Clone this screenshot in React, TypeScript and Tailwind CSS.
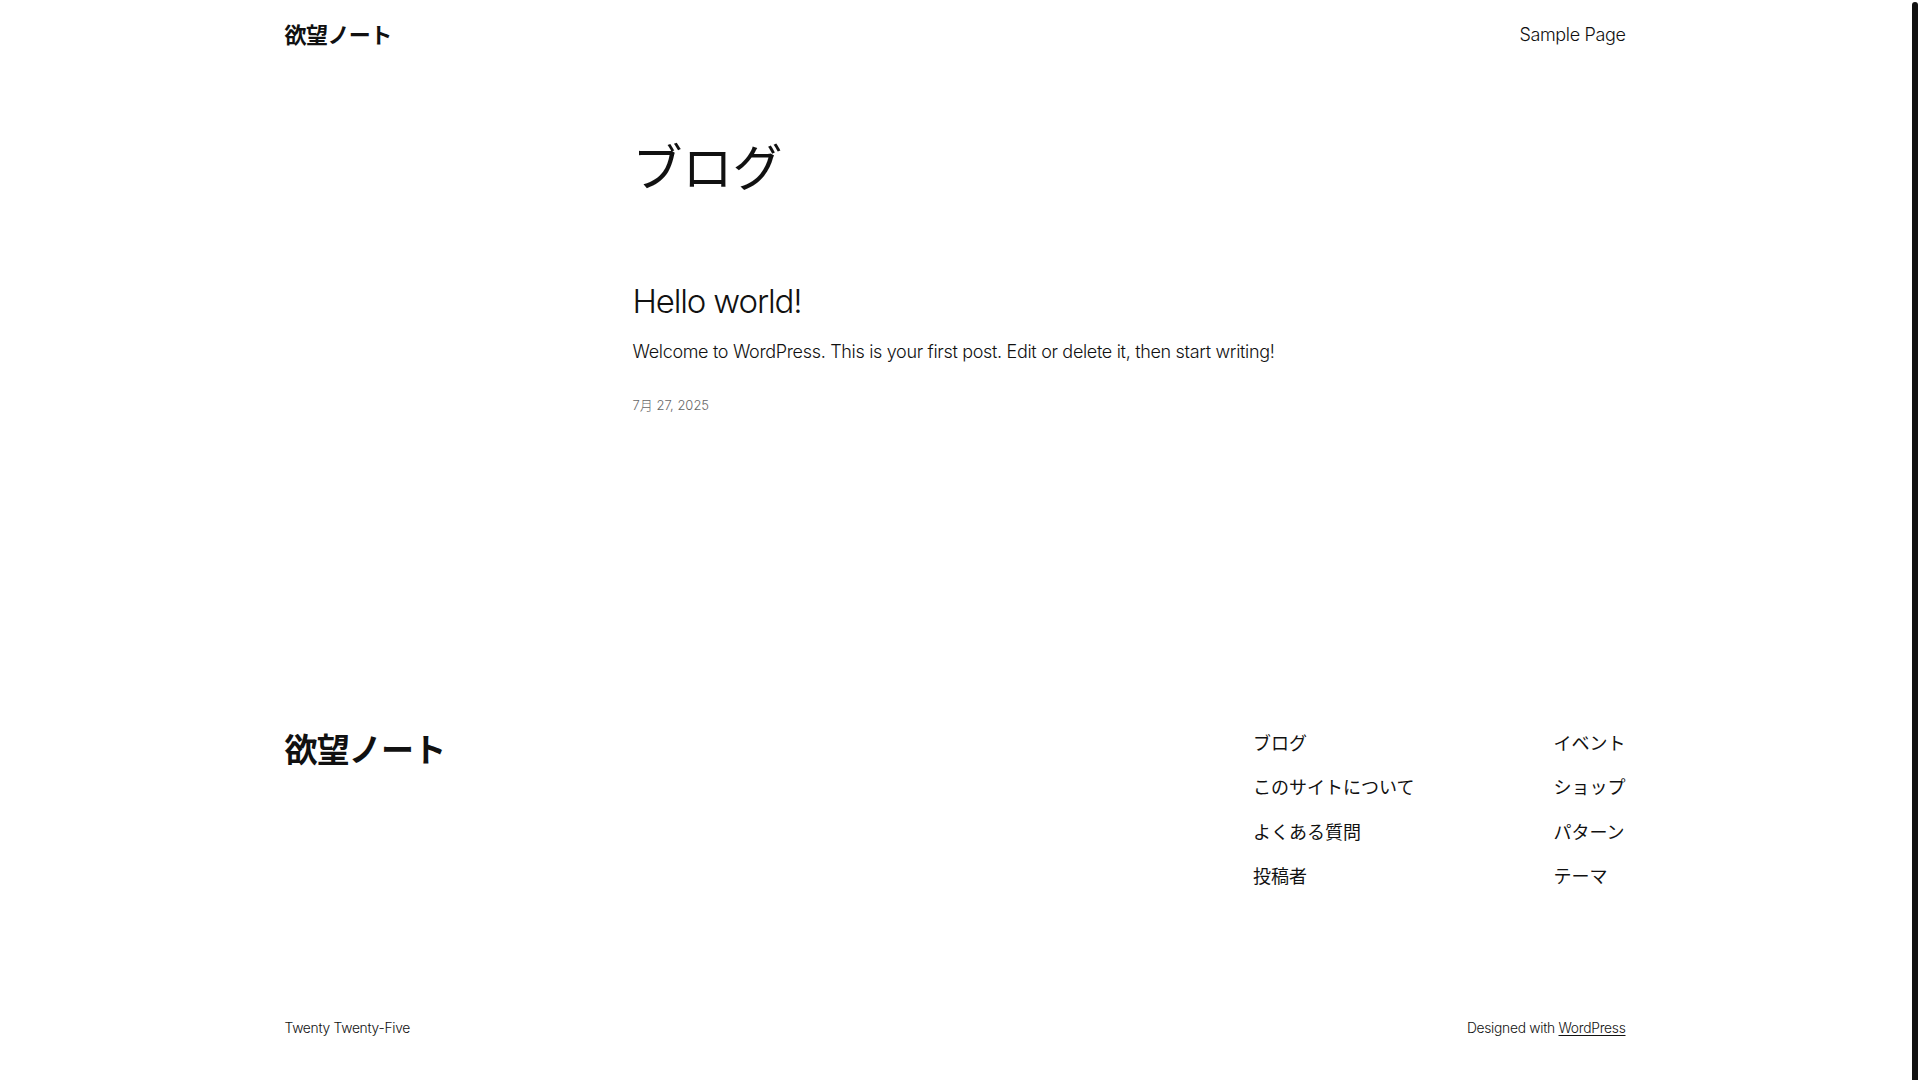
import React from 'react';

const footerLeft = ['ブログ', 'このサイトについて', 'よくある質問', '投稿者'];
const footerRight = ['イベント', 'ショップ', 'パターン', 'テーマ'];

const App: React.FC = () => {
    return (
        <div className="relative min-h-screen bg-white text-[#111111] font-['Inter','Noto_Sans_CJK_JP',sans-serif]">
            <div className="w-[calc(100%-10px)] pb-[41px]">
                {/* header */}
                <header className="mx-auto flex h-[70px] max-w-[1341px] items-center justify-between">
                    <a href="#" className="text-[22px] font-semibold leading-none tracking-tight">欲望ノート</a>
                    <nav>
                        <a href="#" className="text-[18px] font-light leading-none tracking-[-0.02em]">Sample Page</a>
                    </nav>
                </header>

                {/* main */}
                <main className="mx-auto w-[645px] pt-[68px]">
                    <h1 className="text-[50px] font-normal leading-[1.2]">ブログ</h1>
                    <article className="mt-[84px]">
                        <h2 className="text-[33px] font-light leading-[1.2] tracking-[-0.035em]">
                            <a href="#">Hello world!</a>
                        </h2>
                        <p className="mt-[15px] whitespace-nowrap text-[18px] font-light leading-[30px] tracking-[-0.018em]">
                            Welcome to WordPress. This is your first post. Edit or delete it, then start writing!
                        </p>
                        <div className="mt-[28px] text-[13px] font-light leading-[20px] text-[#666666]">7月 27, 2025</div>
                    </article>
                </main>

                {/* footer */}
                <footer className="mx-auto mt-[315px] max-w-[1341px]">
                    <div className="flex items-start justify-between">
                        <a href="#" className="text-[33px] font-semibold leading-[40px] tracking-tight">欲望ノート</a>
                        <div className="flex gap-[139px]">
                            <ul className="flex flex-col gap-[17.5px]">
                                {footerLeft.map((item) => (
                                    <li key={item} className="text-[18px] leading-[27px]">
                                        <a href="#">{item}</a>
                                    </li>
                                ))}
                            </ul>
                            <ul className="flex flex-col gap-[17.5px]">
                                {footerRight.map((item) => (
                                    <li key={item} className="text-[18px] leading-[27px]">
                                        <a href="#">{item}</a>
                                    </li>
                                ))}
                            </ul>
                        </div>
                    </div>
                    <div className="mt-[128px] flex items-center justify-between text-[13.8px] font-light leading-[20px] tracking-[-0.02em]">
                        <p>Twenty Twenty-Five</p>
                        <p>
                            Designed with <a href="#" className="underline underline-offset-2">WordPress</a>
                        </p>
                    </div>
                </footer>
            </div>

            {/* scrollbar thumb */}
            <div className="fixed right-[2px] top-[2px] bottom-0 w-[6px] rounded-t-full bg-[#111111]" />
        </div>
    );
};

export default App;
